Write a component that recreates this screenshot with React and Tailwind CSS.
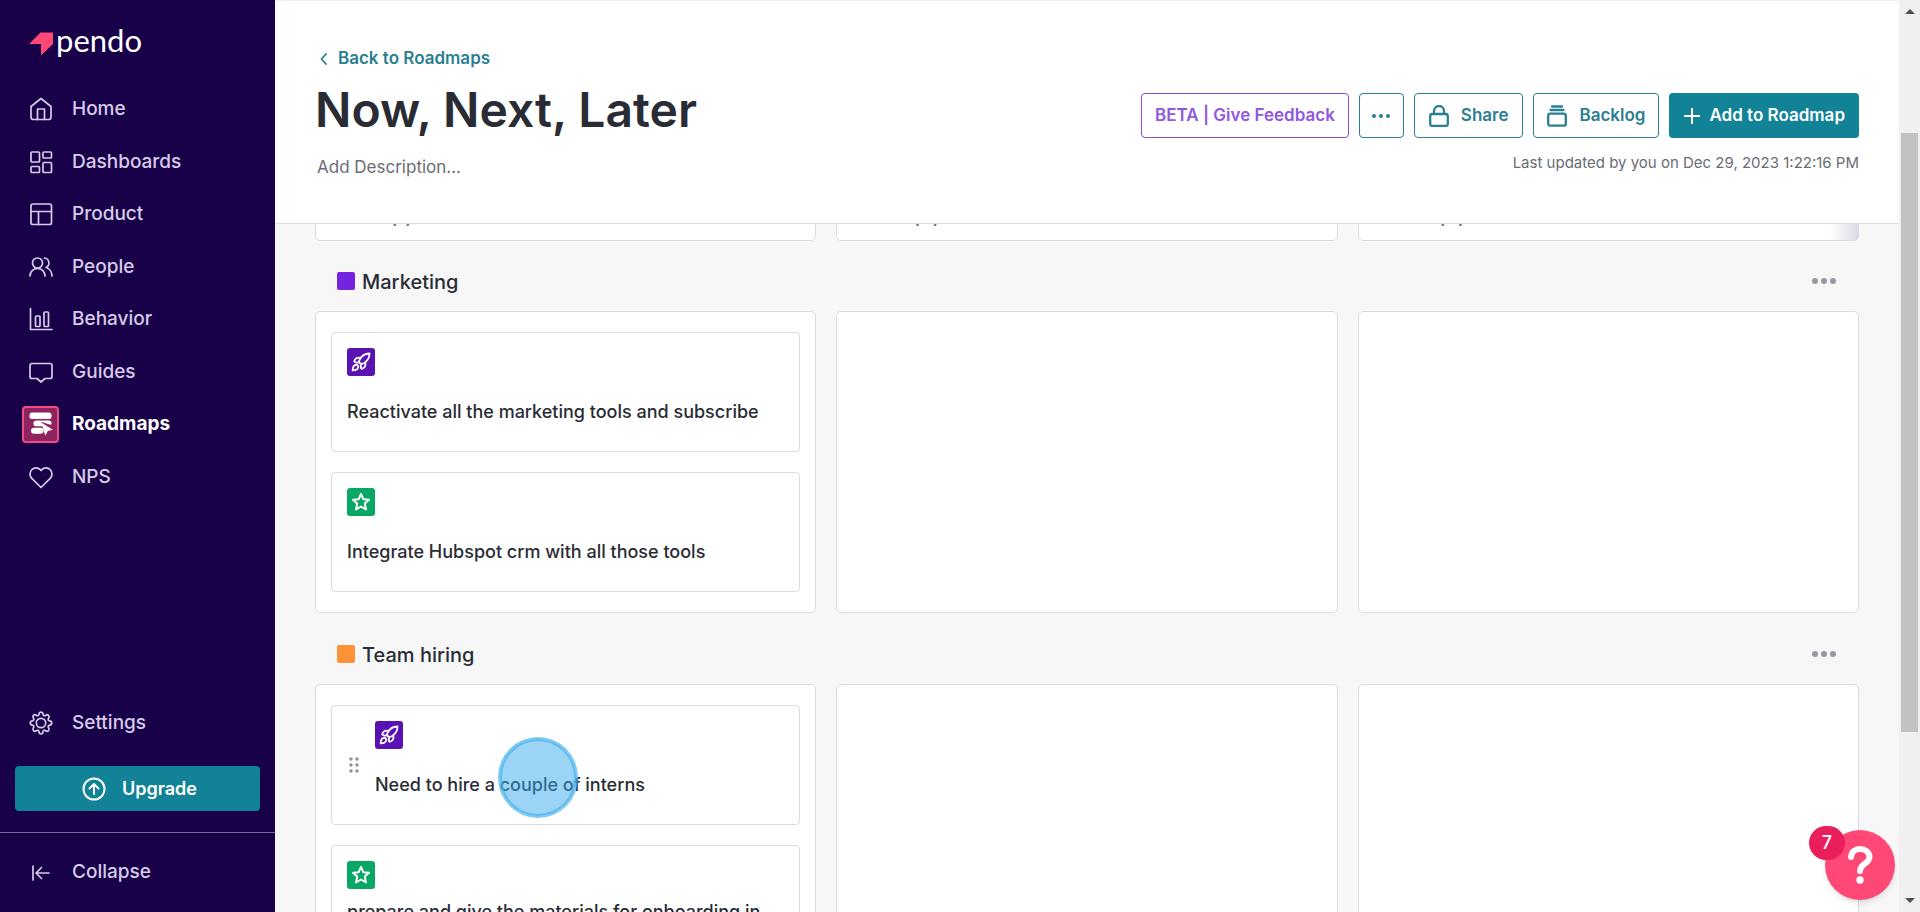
import React from "react";

const navItems = [
  { label: "Home", icon: "home" },
  { label: "Dashboards", icon: "dashboards" },
  { label: "Product", icon: "product" },
  { label: "People", icon: "people" },
  { label: "Behavior", icon: "behavior" },
  { label: "Guides", icon: "guides" },
  { label: "Roadmaps", icon: "roadmaps", active: true },
  { label: "NPS", icon: "nps" },
];

const columns = ["Now (1)", "Next (0)", "Later (0)"];

const swimlanes = [
  {
    name: "Marketing",
    color: "bg-[#7424df]",
    cards: [
      { type: "rocket", title: "Reactivate all the marketing tools and subscribe" },
      { type: "star", title: "Integrate Hubspot crm with all those tools" },
    ],
  },
  {
    name: "Team hiring",
    color: "bg-[#ff9239]",
    cards: [
      { type: "rocket", title: "Need to hire a couple of interns", hovered: true },
      { type: "star", title: "prepare and give the materials for onboarding in team" },
    ],
  },
];

const shapes = {
  home: (
    <>
      <path d="M2 9.5 12 1.5l10 8V20a2.5 2.5 0 0 1-2.5 2.5h-15A2.5 2.5 0 0 1 2 20z" />
      <path d="M8.500 22.500V12h7v10.500" />
    </>
  ),
  dashboards: (
    <>
      <rect x="2" y="2" width="8.500" height="10" rx="1" />
      <rect x="14" y="2" width="8.500" height="6" rx="1" />
      <rect x="2" y="16.500" width="8.500" height="6" rx="1" />
      <rect x="14" y="12.500" width="8.500" height="10" rx="1" />
    </>
  ),
  product: (
    <>
      <rect x="2" y="2" width="20.500" height="20.500" rx="2" />
      <path d="M2 9.500h20.500M9.500 9.500v13" />
    </>
  ),
  people: (
    <>
      <circle cx="8.500" cy="8" r="5" />
      <path d="M1 21c0-4.500 3.300-7.500 7.500-7.500s7.500 3 7.500 7.500M15.500 3a5 5 0 0 1 1.500 9.500c3.500 1 6 4.500 6 8.500" />
    </>
  ),
  behavior: (
    <>
      <path d="M1.500 1.500v21h21.500" />
      <rect x="6.500" y="9" width="4.500" height="10.500" rx="1" />
      <rect x="15" y="5" width="4.500" height="14.500" rx="1" />
    </>
  ),
  guides: <path d="M3 3.500h18a2 2 0 0 1 2 2v11a2 2 0 0 1-2 2h-5l-4 3.500-4-3.500H3a2 2 0 0 1-2-2v-11a2 2 0 0 1 2-2z" />,
  nps: <path d="M12 22.500 2.800 13.300a6 6 0 0 1 8.500-8.600l.7.800.7-.8a6 6 0 0 1 8.500 8.600z" />,
  settings: (
    <>
      <circle cx="12" cy="12" r="4.700" />
      <path d="M10 3.200c.3-2.700 3.700-2.700 4 0 .2 1.500 1.500 2 2.700 1.100 2.100-1.700 4.500.7 2.900 2.800-.9 1.200-.4 2.500 1.100 2.800 2.700.3 2.700 3.900 0 4.200-1.500.2-2 1.500-1.100 2.700 1.600 2.100-.8 4.500-2.900 2.900-1.200-.9-2.500-.4-2.700 1.100-.3 2.700-3.700 2.700-4 0-.2-1.500-1.500-2-2.700-1.100-2.100 1.600-4.500-.8-2.900-2.900.9-1.200.4-2.500-1.100-2.700-2.700-.3-2.700-3.900 0-4.200 1.500-.3 2-1.600 1.100-2.800-1.600-2.100.8-4.500 2.900-2.800C8.500 5.200 9.800 4.700 10 3.200z" />
    </>
  ),
  collapse: <path d="M4 5v14M20 12H7M12.500 6.500 7 12l5.500 5.500" />,
};

function NavIcon({ name }) {
  if (name === "roadmaps") {
    return (
      <span className="w-[37px] h-[37px] rounded border-2 border-[#ee4b7e] bg-[#8d2461] flex items-center justify-center shrink-0">
        <svg viewBox="0 0 24 24" className="w-6 h-6" fill="#fff">
          <rect x="0.500" y="0.500" width="22" height="6.500" rx="2.500" />
          <path d="M7.300 8.500H20a2.500 2.500 0 0 1 2.500 2.500v1.500h-2L12 9.800l2.200 4.500H7.300a2.900 2.900 0 0 1 0-5.800z" />
          <path d="M5 15.800h6.500a3 3 0 0 1 0 6H5a3 3 0 0 1 0-6z" />
          <path d="M12.300 10.500l11.500 7.300-5 1.200-2.600 4.800z" />
        </svg>
      </span>
    );
  }
  return (
    <span className="w-[37px] flex justify-center shrink-0">
      <svg viewBox="0 0 24 24" className="w-6 h-6" fill="none" stroke="currentColor" strokeWidth="1.700" strokeLinecap="round" strokeLinejoin="round">
        {shapes[name]}
      </svg>
    </span>
  );
}

function Sidebar() {
  return (
    <aside className="w-[275px] shrink-0 bg-[#180148] text-[#d6cbe8] text-[19px] font-medium flex flex-col">
      <a href="#" className="flex items-start gap-[3px] pl-[29px] pt-[22px] h-[83px]">
        <svg viewBox="0 0 24 24" className="w-6 h-6 mt-[10px]" fill="#ff4876">
          <path d="M0 12 11.500 0.500H24V12L12 23.500V12z" />
        </svg>
        <span className="font-[Lato,sans-serif] font-normal text-[31px] leading-9 text-white">pendo</span>
      </a>
      <nav className="grid auto-rows-fr h-[420px]">
        {navItems.map((item) => (
          <a
            key={item.label}
            href="#"
            className={
              item.active
                ? "flex items-center gap-[13px] pl-[22px] font-bold text-white"
                : "flex items-center gap-[13px] pl-[22px]"
            }
          >
            <NavIcon name={item.icon} />
            {item.label}
          </a>
        ))}
      </nav>
      <div className="mt-auto">
        <a href="#" className="flex items-center gap-[13px] pl-[22px] h-[52px]">
          <NavIcon name="settings" />
          Settings
        </a>
        <div className="px-[15px] pt-[17px] pb-[21px]">
          <button className="w-full h-[45px] rounded bg-[#128297] text-white text-lg font-semibold flex items-center justify-center gap-4 pl-1">
            <svg viewBox="0 0 24 24" className="w-6 h-6" fill="none" stroke="currentColor" strokeWidth="2" strokeLinecap="round" strokeLinejoin="round">
              <circle cx="12" cy="12" r="10.500" />
              <path d="M12 17V7.500M7.500 11.500l4.500-4.500 4.500 4.500" />
            </svg>
            Upgrade
          </button>
        </div>
        <button className="w-full h-20 border-t border-[#7a67a0] flex items-center gap-[13px] pl-[22px]">
          <NavIcon name="collapse" />
          Collapse
        </button>
      </div>
    </aside>
  );
}

function Header() {
  return (
    <header className="h-[224px] shrink-0 bg-white border-t border-b border-t-[#f0f0f0] border-b-[#dadce5] px-10 pt-[45px] flex justify-between">
      <div>
        <a href="#" className="flex items-center gap-2 pl-[3px] h-[26px] text-[17px] font-semibold text-[#2a7f90]">
          <svg viewBox="0 0 12 12" className="w-3 h-3" fill="none" stroke="currentColor" strokeWidth="1.800" strokeLinecap="round" strokeLinejoin="round">
            <path d="M8 1 3.500 6 8 11" />
          </svg>
          Back to Roadmaps
        </a>
        <h1 className="mt-[11px] h-[55px] leading-[54px] text-5xl/[54px] font-semibold text-[#2a2c35]">Now, Next, Later</h1>
        <p className="mt-4 pl-[2px] text-[17px] leading-[26px] text-[#6a6c75]">Add Description...</p>
      </div>
      <div className="pt-[47px] flex flex-col items-end">
        <div className="flex gap-[10px] text-[17px] font-semibold text-[#2a7f90]">
          <button className="h-[45px] px-[13px] rounded border border-[#8b4dd6] text-[#8f58e0]">BETA | Give Feedback</button>
          <button aria-label="More" className="h-[45px] w-[45px] rounded border border-[#2a7f90] flex items-center justify-center">
            <svg viewBox="0 0 18 4" className="w-[18px] h-1" fill="currentColor">
              <circle cx="2" cy="2" r="2" />
              <circle cx="9" cy="2" r="2" />
              <circle cx="16" cy="2" r="2" />
            </svg>
          </button>
          <button className="h-[45px] px-[14px] rounded border border-[#2a7f90] flex items-center gap-3">
            <svg viewBox="0 0 20 22" className="w-5 h-[22px]" fill="none" stroke="currentColor" strokeWidth="2.300">
              <rect x="1.200" y="9" width="17.600" height="12" rx="2" />
              <path d="M5 9V6a5 5 0 0 1 10 0v3" />
            </svg>
            Share
          </button>
          <button className="h-[45px] px-[13px] rounded border border-[#2a7f90] flex items-center gap-3">
            <svg viewBox="0 0 20 22" className="w-5 h-[22px]" fill="none" stroke="currentColor" strokeWidth="2.300">
              <rect x="1.200" y="8.700" width="17.600" height="12" rx="2" />
              <path d="M3.500 5h13M5 1.500h10" strokeLinecap="round" />
            </svg>
            Backlog
          </button>
          <button className="h-[45px] px-[14px] rounded bg-[#128297] text-white flex items-center gap-2">
            <svg viewBox="0 0 18 18" className="w-[18px] h-[18px]" fill="none" stroke="currentColor" strokeWidth="2">
              <path d="M9 1v16M1 9h16" />
            </svg>
            Add to Roadmap
          </button>
        </div>
        <p className="mt-[13px] text-[15px] leading-6 text-[#6a6c75]">Last updated by you on Dec 29, 2023 1:22:16 PM</p>
      </div>
    </header>
  );
}

function CardIcon({ type }) {
  if (type === "rocket") {
    return (
      <span className="w-7 h-7 rounded-[3px] bg-[#5a12b3] flex items-center justify-center">
        <svg viewBox="0 0 20 20" className="w-5 h-5" fill="none" stroke="#fff" strokeWidth="1.800" strokeLinejoin="round">
          <path d="M18.500 1.500c-4.500 0-8.500 2.500-10.500 7.500a3 3 0 0 0 3 3c5-2 7.500-6 7.500-10.500z" />
          <path d="M9.500 5.800c-3-.5-5.500.7-6.300 3.700 1 1.200 2.800 1.300 4.700.6M10.300 12.300c-.9 1.800-.8 3.400.4 4.500 3-.8 4.200-3.300 3.600-6.300" />
          <path d="M6 12.800c-2.600-.4-4.300 1.500-4.400 5.600 4.100 0 6-1.700 5.600-4.300z" />
        </svg>
      </span>
    );
  }
  return (
    <span className="w-7 h-7 rounded-[3px] bg-[#08a763] flex items-center justify-center">
      <svg viewBox="0 0 20 20" className="w-5 h-5" fill="none" stroke="#fff" strokeWidth="2" strokeLinejoin="round">
        <path d="m10 2 2.300 5.200 5.700.6-4.200 3.800 1.200 5.900-5-3-5 3 1.200-5.900L2 7.800l5.700-.6z" />
      </svg>
    </span>
  );
}

function Card({ card }) {
  return (
    <article className="h-[120px] rounded border border-[#dadce0] bg-white px-[15px] flex items-center">
      {card.hovered && (
        <svg viewBox="0 0 10 16" className="w-[10px] h-4 ml-[2px] mr-4 shrink-0" fill="#8f9199">
          <circle cx="2" cy="2" r="1.700" />
          <circle cx="8" cy="2" r="1.700" />
          <circle cx="2" cy="8" r="1.700" />
          <circle cx="8" cy="8" r="1.700" />
          <circle cx="2" cy="14" r="1.700" />
          <circle cx="8" cy="14" r="1.700" />
        </svg>
      )}
      <div className="self-start pt-[15px] min-w-0">
        <CardIcon type={card.type} />
        <div className="mt-[10px] h-[52px] flex items-center">
          <h3 className="text-lg leading-[26px] font-medium text-[#2a2c35]">{card.title}</h3>
        </div>
      </div>
      {card.hovered && (
        <span className="absolute left-[182px] top-[52px] w-[80px] h-[81px] rounded-full border-2 border-[#5cb8ee]/40 bg-[#38a9ea]/50 ring-2 ring-inset ring-[#45b0ee]/70" />
      )}
    </article>
  );
}

function Swimlane({ lane }) {
  return (
    <section className="mb-px">
      <div className="h-[70px] pt-[9px] pl-[22px] pr-[23px] flex items-center">
        <span className={`w-[18px] h-[18px] rounded-[2px] ${lane.color}`} />
        <h2 className="ml-[7px] pt-[2px] text-xl font-medium text-[#2a2c35]">{lane.name}</h2>
        <button aria-label="Lane options" className="ml-auto">
          <svg viewBox="0 0 24 6" className="w-6 h-[6px]" fill="#96989f">
            <circle cx="3" cy="3" r="3" />
            <circle cx="12" cy="3" r="3" />
            <circle cx="21" cy="3" r="3" />
          </svg>
        </button>
      </div>
      <div className="grid grid-cols-3 gap-5">
        <div className="relative rounded-[5px] border border-[#d8dbe0] bg-white px-[15px] py-5 flex flex-col gap-5">
          {lane.cards.map((card) => (
            <Card key={card.title} card={card} />
          ))}
        </div>
        <div className="rounded-[5px] border border-[#d8dbe0] bg-white" />
        <div className="rounded-[5px] border border-[#d8dbe0] bg-white" />
      </div>
    </section>
  );
}

function App() {
  return (
    <div className="h-screen flex overflow-hidden font-[Inter,sans-serif] bg-[#f7f7f7]">
      <Sidebar />
      <div className="flex-1 min-w-0 flex flex-col">
        <Header />
        <main className="flex-1 min-h-0 overflow-hidden px-10 flex flex-col">
          {/* Column headings, scrolled under the page header */}
          <div className="grid grid-cols-3 gap-5 -mt-[39px] shrink-0">
            {columns.map((column, i) => (
              <div
                key={column}
                className={
                  i === 2
                    ? "h-14 rounded-[5px] border border-[#d8dbe0] bg-linear-to-l from-[#d8dbe4] to-white to-[28px] px-[25px] pt-[17px]"
                    : "h-14 rounded-[5px] border border-[#d8dbe0] bg-white px-[25px] pt-[17px]"
                }
              >
                <h2 className="text-xl font-medium text-[#6a6c75]">{column}</h2>
              </div>
            ))}
          </div>
          {swimlanes.map((lane) => (
            <Swimlane key={lane.name} lane={lane} />
          ))}
        </main>
      </div>

      {/* Scrollbar */}
      <div className="w-[21px] shrink-0 bg-[#f0f0f0] flex flex-col items-center">
        <svg viewBox="0 0 10 5" className="w-[10px] h-[5px] mt-[9px]" fill="#505050">
          <path d="M0 5 5 0l5 5z" />
        </svg>
        <div className="flex-1 w-[17px] pt-[119px] pb-[166px]">
          <div className="h-full bg-[#c1c1c1]" />
        </div>
        <svg viewBox="0 0 10 5" className="w-[10px] h-[5px] mb-[9px]" fill="#505050">
          <path d="M0 0h10L5 5z" />
        </svg>
      </div>

      <div className="fixed right-[25px] bottom-3">
        <button aria-label="Help" className="w-[70px] h-[70px] rounded-full bg-[#ff4876] shadow-md flex items-center justify-center">
          <svg viewBox="0 0 26 38" className="w-[26px] h-[38px]">
            <path d="M4 11c.5-5 4-8 9-8s9.500 3 9.500 8c0 6.500-9.500 7-9.500 14" fill="none" stroke="#fff" strokeWidth="6" strokeLinecap="round" strokeLinejoin="round" />
            <circle cx="13" cy="34" r="3.700" fill="#fff" />
          </svg>
        </button>
        <span className="absolute -left-4 -top-1 w-9 h-[34px] rounded-full bg-[#e91e5a] text-white text-lg font-medium flex items-center justify-center">
          7
        </span>
      </div>
    </div>
  );
}

export default App;
